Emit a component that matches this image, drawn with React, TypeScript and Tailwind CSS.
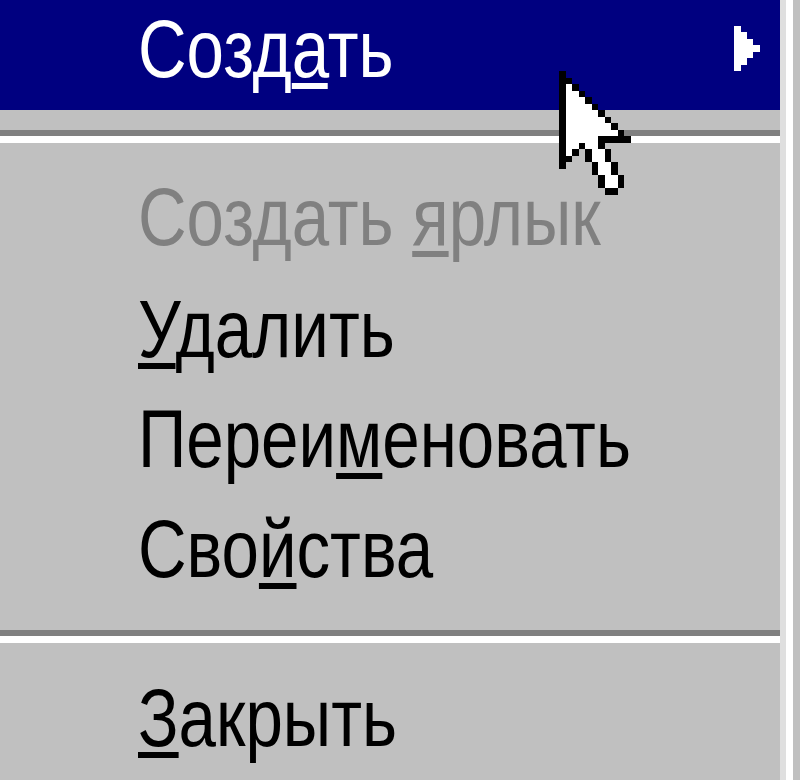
import React from "react";

type Item = {
  before: string;
  key: string;
  after: string;
  disabled?: boolean;
  active?: boolean;
  submenu?: boolean;
  h: string;
};

const rowsTop: Item[] = [
  { before: "Созд", key: "а", after: "ть", active: true, submenu: true, h: "h-[110px]" },
];

const rowsMid: Item[] = [
  { before: "Создать ", key: "я", after: "рлык", disabled: true, h: "h-[112px]" },
  { before: "", key: "У", after: "далить", h: "h-[110px]" },
  { before: "Переи", key: "м", after: "еновать", h: "h-[110px]" },
  { before: "Сво", key: "й", after: "ства", h: "h-[110px]" },
];

const rowsBottom: Item[] = [{ before: "", key: "З", after: "акрыть", h: "h-[111px]" }];

// little stepped triangle shown for a submenu
const SubArrow = () => (
  <svg width="26" height="45" viewBox="0 0 4 7" shapeRendering="crispEdges" className="ml-auto mr-[20px] mt-[18px]">
    <rect x="0" y="0" width="1" height="7" fill="#fff" />
    <rect x="1" y="1" width="1" height="5" fill="#fff" />
    <rect x="2" y="2" width="1" height="3" fill="#fff" />
    <rect x="3" y="3" width="1" height="1" fill="#fff" />
  </svg>
);

const cursorMap = [
  "B..........",
  "BB.........",
  "BWB........",
  "BWWB.......",
  "BWWWB......",
  "BWWWWB.....",
  "BWWWWWB....",
  "BWWWWWWB...",
  "BWWWWWWWB..",
  "BWWWWWWWWB.",
  "BWWWWWBBBBB",
  "BWWBWWB....",
  "BWB.BWWB...",
  "BB..BWWB...",
  "B....BWWB..",
  ".....BWWB..",
  "......BWWB.",
  "......BWWB.",
  ".......BB..",
];

const Cursor = () => (
  <svg
    width="71.5"
    height="123.5"
    viewBox="0 0 11 19"
    shapeRendering="crispEdges"
    className="absolute left-[559px] top-[71px]"
  >
    {cursorMap.map((row, y) =>
      row.split("").map((c, x) =>
        c === "." ? null : (
          <rect key={`${x}-${y}`} x={x} y={y} width="1.02" height="1.02" fill={c === "B" ? "#000" : "#fff"} />
        )
      )
    )}
  </svg>
);

const MenuRow = ({ item }: { item: Item }) => {
  const color = item.active ? "bg-[#000080] text-white" : item.disabled ? "text-[#808080]" : "text-black";
  return (
    <div className={`flex items-start pt-[8px] pl-[138px] ${item.h} ${color}`}>
      <span className="inline-block origin-left scale-x-[0.82] whitespace-pre text-[82px] leading-none">
        {item.before}
        <span className="underline decoration-[6px] underline-offset-[6px] [text-decoration-skip-ink:none]">
          {item.key}
        </span>
        {item.after}
      </span>
      {item.submenu && <SubArrow />}
    </div>
  );
};

const Separator = ({ h }: { h: string }) => (
  <div className={`flex flex-col pt-[20px] ${h}`}>
    <div className="h-[6px] bg-[#808080]" />
    <div className="h-[7px] bg-white" />
  </div>
);

export default function App() {
  return (
    <div
      className="relative flex w-[800px] h-[780px] overflow-hidden bg-[#c0c0c0]"
      style={{ fontFamily: '"Liberation Sans", Arial, sans-serif' }}
    >
      <div className="flex flex-col w-[780px]">
        {rowsTop.map((r) => (
          <MenuRow key={r.before + r.key} item={r} />
        ))}
        <Separator h="h-[58px]" />
        {rowsMid.map((r) => (
          <MenuRow key={r.before + r.key} item={r} />
        ))}
        <Separator h="h-[59px]" />
        {rowsBottom.map((r) => (
          <MenuRow key={r.before + r.key} item={r} />
        ))}
      </div>
      <div className="w-[6px] bg-[#dfdfdf]" />
      <div className="w-[7px] bg-white" />
      <div className="w-[7px] bg-[#c0c0c0]" />
      <Cursor />
    </div>
  );
}
